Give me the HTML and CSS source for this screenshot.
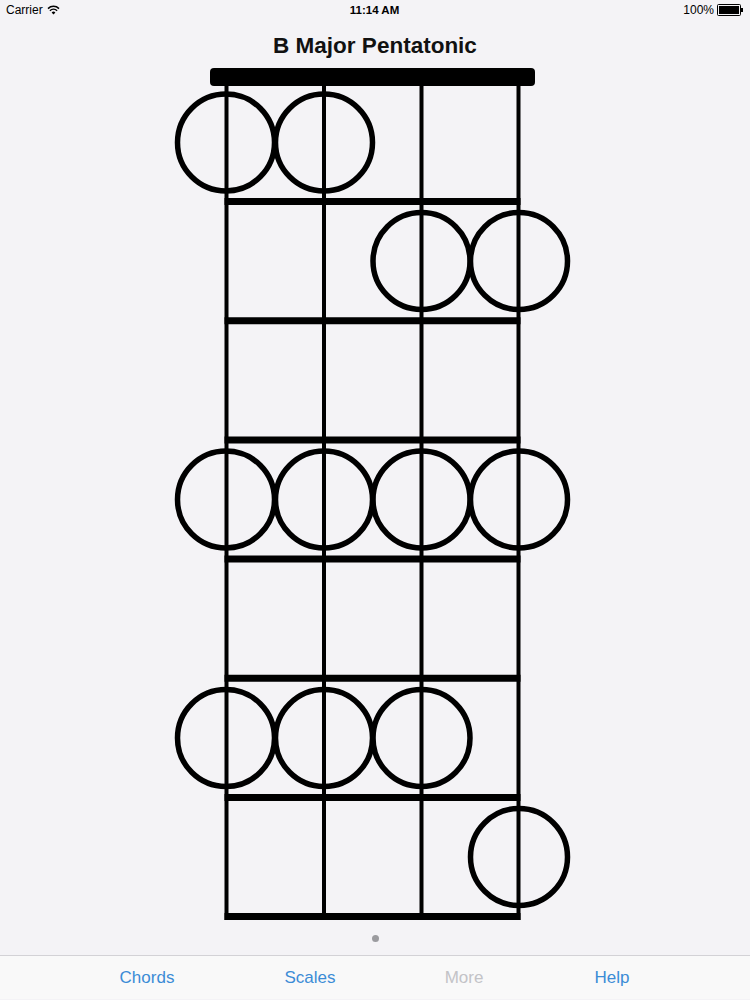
FILE: index.html
```html
<!DOCTYPE html>
<html>
<head>
<meta charset="utf-8">
<link rel="stylesheet" href="styles.css">
</head>
<body>
<div class="screen">
  <div class="status">
    <div class="status-left">
      <span>Carrier</span>
      <svg class="wifi" width="13" height="10" viewBox="0 0 13 10">
        <path d="M6.5 9.6 L4.6 7.5 A2.8 2.8 0 0 1 8.4 7.5 Z" fill="#000"/>
        <path d="M2.9 5.7 A5.2 5.2 0 0 1 10.1 5.7" fill="none" stroke="#000" stroke-width="1.5"/>
        <path d="M1 3.6 A7.9 7.9 0 0 1 12 3.6" fill="none" stroke="#000" stroke-width="1.5"/>
      </svg>
    </div>
    <div class="status-center">11:14 AM</div>
    <div class="status-right">
      <span>100%</span>
      <span class="battery"><span class="battery-fill"></span></span><span class="battery-nub"></span>
    </div>
  </div>

  <div class="title">B Major Pentatonic</div>

  <svg class="board" width="750" height="870" viewBox="0 60 750 870">
    <rect x="210" y="68" width="325" height="18" rx="4" fill="#000"/>
    <g stroke="#000" stroke-width="4">
      <line x1="226.5" y1="84" x2="226.5" y2="920"/>
      <line x1="324" y1="84" x2="324" y2="920"/>
      <line x1="421.5" y1="84" x2="421.5" y2="920"/>
      <line x1="518.5" y1="84" x2="518.5" y2="920"/>
    </g>
    <g stroke="#000" stroke-width="7">
      <line x1="224.5" y1="201.5" x2="520.5" y2="201.5"/>
      <line x1="224.5" y1="320.7" x2="520.5" y2="320.7"/>
      <line x1="224.5" y1="440" x2="520.5" y2="440"/>
      <line x1="224.5" y1="559" x2="520.5" y2="559"/>
      <line x1="224.5" y1="678.3" x2="520.5" y2="678.3"/>
      <line x1="224.5" y1="797.5" x2="520.5" y2="797.5"/>
      <line x1="224.5" y1="916.5" x2="520.5" y2="916.5"/>
    </g>
    <g fill="none" stroke="#000" stroke-width="5.5">
      <circle cx="226" cy="142.5" r="48.5"/>
      <circle cx="324" cy="142.5" r="48.5"/>
      <circle cx="421.5" cy="261" r="48.5"/>
      <circle cx="519" cy="261" r="48.5"/>
      <circle cx="226" cy="499.5" r="48.5"/>
      <circle cx="324" cy="499.5" r="48.5"/>
      <circle cx="421.5" cy="499.5" r="48.5"/>
      <circle cx="519" cy="499.5" r="48.5"/>
      <circle cx="226" cy="738" r="48.5"/>
      <circle cx="324" cy="738" r="48.5"/>
      <circle cx="421.5" cy="738" r="48.5"/>
      <circle cx="519" cy="857" r="48.5"/>
    </g>
  </svg>

  <div class="pager"><span class="dot"></span></div>

  <div class="tabbar">
    <div class="tab tab-chords">Chords</div>
    <div class="tab tab-scales">Scales</div>
    <div class="tab tab-more">More</div>
    <div class="tab tab-help">Help</div>
  </div>
</div>
</body>
</html>
```

FILE: styles.css
```css
html, body {
  margin: 0;
  padding: 0;
}
body {
  width: 750px;
  height: 1000px;
  overflow: hidden;
  background: #f4f3f6;
  font-family: "Liberation Sans", Arial, sans-serif;
  color: #000;
}
.screen {
  display: flex;
  flex-direction: column;
  width: 750px;
  height: 1000px;
}
.status {
  height: 20px;
  display: flex;
  align-items: center;
  justify-content: space-between;
  padding: 0 7px 0 6px;
  font-size: 12px;
  position: relative;
}
.status-left {
  display: flex;
  align-items: center;
  gap: 4px;
  width: 120px;
}
.wifi {
  display: block;
  margin-top: -1px;
}
.status-center {
  font-size: 11.5px;
  font-weight: bold;
  text-align: center;
  flex: 1;
}
.status-right {
  display: flex;
  align-items: center;
  justify-content: flex-end;
  width: 120px;
}
.battery {
  display: inline-block;
  width: 20px;
  height: 8px;
  border: 1px solid #000;
  border-radius: 1.5px;
  margin-left: 3px;
  padding: 1px;
  box-sizing: content-box;
  background: #f4f3f6;
}
.battery-fill {
  display: block;
  width: 100%;
  height: 100%;
  background: #000;
}
.battery-nub {
  display: inline-block;
  width: 2px;
  height: 4px;
  background: #000;
}
.title {
  margin-top: 12px;
  height: 28px;
  line-height: 28px;
  text-align: center;
  font-size: 22.5px;
  font-weight: bold;
  color: #111;
}
.board {
  display: block;
  flex: none;
}
.pager {
  height: 25px;
  display: flex;
  justify-content: center;
  align-items: flex-start;
}
.dot {
  width: 7px;
  height: 7px;
  border-radius: 50%;
  background: #9b9b9f;
  margin-top: 4.5px;
}
.tabbar {
  height: 43px;
  border-top: 1px solid #d3d2d6;
  background: #f9f9f9;
  display: flex;
  font-size: 17px;
  line-height: 43px;
  color: #3b8cd6;
}
.tab {
  width: 110px;
  text-align: center;
}
.tab-chords { margin-left: 92px; }
.tab-scales { margin-left: 53px; }
.tab-more { margin-left: 44px; color: #c3c3c7; }
.tab-help { margin-left: 38px; }
```
